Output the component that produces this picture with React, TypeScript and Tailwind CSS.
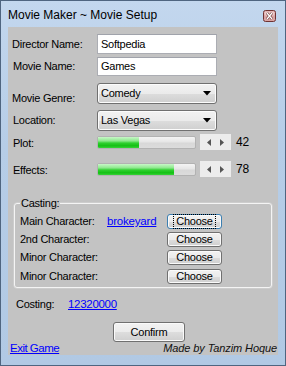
import React from "react";

const font = { fontFamily: '"Liberation Sans", Arial, sans-serif' };

function Label({ children, className = "" }: { children: React.ReactNode; className?: string }) {
  return <span className={`text-[11px] leading-[13px] tracking-[-0.25px] text-black ${className}`}>{children}</span>;
}

function TextBox({ value }: { value: string }) {
  return (
    <div className="w-[120px] h-full bg-white border border-[#abadb3] border-t-[#a0a3ab] flex items-center pl-[3px]">
      <Label>{value}</Label>
    </div>
  );
}

function Combo({ value }: { value: string }) {
  return (
    <div className="w-[120px] h-full rounded-[3px] border border-[#707070] bg-[linear-gradient(to_bottom,#f2f2f2_0%,#ebebeb_50%,#dddddd_51%,#cfcfcf_100%)] flex items-center justify-between pl-[3px] pr-[5px] shadow-[inset_0_0_0_1px_#fcfcfc]">
      <Label className="text-[11.5px]">{value}</Label>
      <svg width="8" height="5" viewBox="0 0 8 5"><path d="M0 0H8L4 4.5Z" fill="#000" /></svg>
    </div>
  );
}

function Progress({ pct }: { pct: number }) {
  return (
    <div className="w-[99px] h-[13px] rounded-[2px] border border-[#b2b2b2] bg-[linear-gradient(to_bottom,#f4f4f4_0%,#e6e6e6_45%,#d8d8d8_55%,#dcdcdc_100%)] overflow-hidden flex">
      <div
        className="h-full bg-[linear-gradient(to_bottom,#c8f7c8_0%,#8ee98e_35%,#2fd02f_55%,#14c014_80%,#37d337_100%)]"
        style={{ width: `${pct}%` }}
      />
    </div>
  );
}

function Spin() {
  return (
    <div className="w-[31px] h-[16px] bg-[#ececec] flex items-center justify-around px-[2px]">
      <svg width="4" height="7" viewBox="0 0 4 7"><path d="M4 0V7L0 3.5Z" fill="#555" /></svg>
      <svg width="4" height="7" viewBox="0 0 4 7"><path d="M0 0V7L4 3.5Z" fill="#555" /></svg>
    </div>
  );
}

function Btn({ text, focused = false, className = "" }: { text: string; focused?: boolean; className?: string }) {
  return (
    <div
      className={`rounded-[3px] border ${focused ? "border-[#3c7fb1]" : "border-[#707070]"} bg-[linear-gradient(to_bottom,#f2f2f2_0%,#ebebeb_50%,#dddddd_51%,#cfcfcf_100%)] shadow-[inset_0_0_0_1px_#fafafa] flex items-center justify-center ${className}`}
    >
      <div className={`flex items-center justify-center px-[2px] ${focused ? "outline outline-1 outline-dotted outline-black" : ""}`}>
        <Label>{text}</Label>
      </div>
    </div>
  );
}

export default function App() {
  return (
    <div style={font} className="w-[286px] h-[366px] border border-[#4f6580] bg-[linear-gradient(to_bottom,#c3d7ee_0%,#b6cde7_40%,#b1c9e4_100%)] flex flex-col overflow-hidden">
      {/* Title bar */}
      <div className="h-[26px] flex items-center justify-between pl-[7px] pr-[9px] shrink-0">
        <span className="text-[12px] text-black mt-[2px]">Movie Maker ~ Movie Setup</span>
        <svg width="13" height="12" viewBox="0 0 13 12" className="mt-[3px]">
          <rect x="0.5" y="0.5" width="12" height="11" rx="2" fill="#d9a4a4" stroke="#6e3232" />
          <rect x="1.5" y="1.5" width="10" height="4" rx="1" fill="#ecc8c8" />
          <path d="M4 3L9 9M9 3L4 9" stroke="#5a2525" strokeWidth="2.6" />
          <path d="M4 3L9 9M9 3L4 9" stroke="#fff" strokeWidth="1.4" />
        </svg>
      </div>

      {/* Client area */}
      <div className="mx-[7px] h-[328px] bg-[#c3c3c3] flex flex-col shrink-0">
        <div className="flex h-[20px] mt-[7px] items-center">
          <Label className="w-[89px] pl-[4px]">Director Name:</Label>
          <TextBox value="Softpedia" />
        </div>
        <div className="flex h-[19px] mt-[3px] items-center">
          <Label className="w-[89px] pl-[5px]">Movie Name:</Label>
          <TextBox value="Games" />
        </div>
        <div className="flex h-[21px] mt-[7px] items-center">
          <Label className="w-[89px] pl-[4px] mt-[9px]">Movie Genre:</Label>
          <Combo value="Comedy" />
        </div>
        <div className="flex h-[21px] mt-[6px] items-center">
          <Label className="w-[89px] pl-[5px]">Location:</Label>
          <Combo value="Las Vegas" />
        </div>
        <div className="flex h-[16px] mt-[3px] items-center">
          <Label className="w-[89px] pl-[5px] mt-[2px]">Plot:</Label>
          <Progress pct={42} />
          <div className="ml-[4px]"><Spin /></div>
          <Label className="ml-[5px] text-[12px]">42</Label>
        </div>
        <div className="flex h-[16px] mt-[11px] items-center">
          <Label className="w-[89px] pl-[5px] mt-[2px]">Effects:</Label>
          <Progress pct={78} />
          <div className="ml-[4px]"><Spin /></div>
          <Label className="ml-[5px] text-[12px]">78</Label>
        </div>

        <fieldset className="mt-[19px] ml-[6px] w-[258px] border border-[#f4f4f4] rounded-[3px] px-0 pb-[3px] shadow-[0_0_0_0.5px_#d8d8d8]">
          <legend className="ml-[5px] px-[1px] text-[11px] leading-[14px] tracking-[-0.25px] text-black">Casting:</legend>
          <div className="flex flex-col pl-[5px] mt-[4px]">
            {[
              { label: "Main Character:", link: "brokeyard", focused: true, mt: 0 },
              { label: "2nd Character:", link: "", focused: false, mt: 3 },
              { label: "Minor Character:", link: "", focused: false, mt: 3 },
              { label: "Minor Character:", link: "", focused: false, mt: 4 },
            ].map((r, i) => (
              <div
                key={i}
                className={`flex h-[15px] items-center ${r.mt === 3 ? "mt-[3px]" : r.mt === 4 ? "mt-[4px]" : ""}`}
              >
                <Label className="w-[87px]">{r.label}</Label>
                <span className="w-[60px] text-[11.5px] leading-[13px] tracking-[-0.2px] text-[#0000ff] underline">{r.link}</span>
                <Btn text="Choose" focused={r.focused} className="w-[55px] h-[15px]" />
              </div>
            ))}
          </div>
        </fieldset>

        <div className="flex h-[14px] mt-[9px] items-center">
          <Label className="w-[60px] pl-[8px] text-[11.5px]">Costing:</Label>
          <span className="text-[11.5px] leading-[13px] tracking-[-0.3px] text-[#0000ff] underline">12320000</span>
        </div>

        <div className="flex mt-[11px] pl-[105px]">
          <Btn text="Confirm" className="w-[72px] h-[20px]" />
        </div>

        <div className="flex h-[13px] items-center justify-between pl-[2px] pr-[1px] mt-[0px]">
          <span className="text-[11.5px] leading-[13px] tracking-[-0.5px] text-[#0000ff] underline">Exit Game</span>
          <span className="text-[11px] leading-[13px] italic text-[#111] tracking-[-0.1px]">Made by Tanzim Hoque</span>
        </div>
      </div>
    </div>
  );
}
